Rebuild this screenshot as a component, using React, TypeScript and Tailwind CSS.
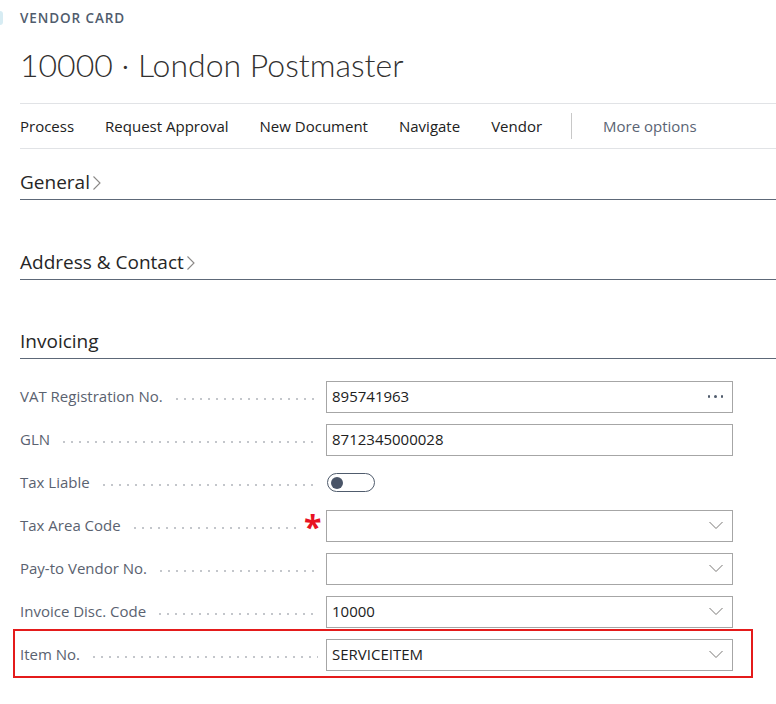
const font = { fontFamily: '"Open Sans", "Noto Sans", sans-serif' };

const actions = ["Process", "Request Approval", "New Document", "Navigate", "Vendor"];

type Field = {
  label: string;
  kind: "text" | "lookup" | "select" | "toggle";
  value?: string;
  required?: boolean;
  marked?: boolean;
};

const fields: Field[] = [
  { label: "VAT Registration No.", kind: "lookup", value: "895741963" },
  { label: "GLN", kind: "text", value: "8712345000028" },
  { label: "Tax Liable", kind: "toggle" },
  { label: "Tax Area Code", kind: "select", value: "", required: true },
  { label: "Pay-to Vendor No.", kind: "select", value: "" },
  { label: "Invoice Disc. Code", kind: "select", value: "10000" },
  { label: "Item No.", kind: "select", value: "SERVICEITEM", marked: true },
];

const Chevron = () => (
  <svg width="10" height="18" viewBox="0 0 10 18" className="ml-[2px] mt-[2px]">
    <polyline points="1.5,2.5 8,9 1.5,15.5" fill="none" stroke="#8a8886" strokeWidth="1.1" />
  </svg>
);

const SelectChevron = () => (
  <svg width="16" height="9" viewBox="0 0 16 9">
    <polyline points="1.5,1 8,7.5 14.5,1" fill="none" stroke="#7a7876" strokeWidth="1" />
  </svg>
);

const SectionHeader = ({ title, collapsed, className }: { title: string; collapsed?: boolean; className: string }) => (
  <div className={`flex items-center border-b border-[#5d6878] pb-[5px] ${className}`}>
    <h2 className="text-[19px] leading-6 font-medium text-[#262626]">{title}</h2>
    {collapsed && <Chevron />}
  </div>
);

const FieldRow = ({ field }: { field: Field }) => (
  <div className="relative flex h-[43px] items-center">
    {field.marked && (
      <span className="pointer-events-none absolute -left-[7px] -right-[20px] top-[-4px] bottom-[-2px] border-2 border-[#e41b1b]"></span>
    )}
    <div className="flex w-[306px] items-center pr-[8px]">
      <span className="text-[15px] text-[#5a6270] whitespace-nowrap">{field.label}</span>
      <span className="ml-[10px] mt-[4px] h-[4px] flex-1 bg-[radial-gradient(circle,#c2c5ca_0.7px,transparent_1px)] bg-[length:8px_4px] bg-repeat-x"></span>
      {field.required && (
        <span className="ml-[2px] mt-[2px] w-[14px] text-[32px] leading-none font-bold text-[#e81123]">*</span>
      )}
    </div>
    {field.kind === "toggle" ? (
      <div className="ml-[1px] flex h-[19px] w-[48px] items-center rounded-full border-[1.5px] border-[#505c6d] px-[2.5px]">
        <span className="h-[12px] w-[12px] rounded-full bg-[#4a5568]"></span>
      </div>
    ) : (
      <div className="flex h-[32px] w-[407px] items-center border border-[#a6a6a6] pl-[5px] pr-[8px]">
        <span className="flex-1 text-[15px] text-[#212121]">{field.value}</span>
        {field.kind === "lookup" && (
          <span className="flex gap-[4px] pr-[1px]">
            <span className="h-[2.5px] w-[2.5px] rounded-full bg-[#505c6d]"></span>
            <span className="h-[2.5px] w-[2.5px] rounded-full bg-[#505c6d]"></span>
            <span className="h-[2.5px] w-[2.5px] rounded-full bg-[#505c6d]"></span>
          </span>
        )}
        {field.kind === "select" && <SelectChevron />}
      </div>
    )}
  </div>
);

const App = () => {
  return (
    <div className="relative h-[704px] w-[776px] overflow-hidden bg-white" style={font}>
      <span className="absolute left-[-3px] top-[11px] h-[14px] w-[6px] rounded-full bg-[#d7ecf3]"></span>
      <div className="pl-[20px]">
        <div className="pt-[8px] text-[13.5px] leading-5 font-semibold tracking-[0.9px] text-[#505c6d]">VENDOR CARD</div>
        <h1
          className="mt-[19px] text-[32px] leading-[36px] font-light text-[#323130]"
          style={{ fontFamily: 'Lato, "Open Sans", sans-serif' }}
        >
          10000 · London Postmaster
        </h1>
        <div className="mt-[20px] flex h-[46px] items-center border-y border-[#e1e3e6] text-[15px] text-[#212121]">
          <div className="flex items-center gap-[31px]">
            {actions.map((a) => (
              <span key={a}>{a}</span>
            ))}
          </div>
          <span className="ml-[29px] h-[26px] w-px bg-[#c8c8c8]"></span>
          <span className="ml-[31px] text-[#5a6474]">More options</span>
        </div>

        <SectionHeader title="General" collapsed className="mt-[21px]" />
        <SectionHeader title="Address & Contact" collapsed className="mt-[50px]" />
        <SectionHeader title="Invoicing" className="mt-[49px]" />

        <div className="mt-[16px] w-[713px]">
          {fields.map((f) => (
            <FieldRow key={f.label} field={f} />
          ))}
        </div>
      </div>
    </div>
  );
};

export default App;
